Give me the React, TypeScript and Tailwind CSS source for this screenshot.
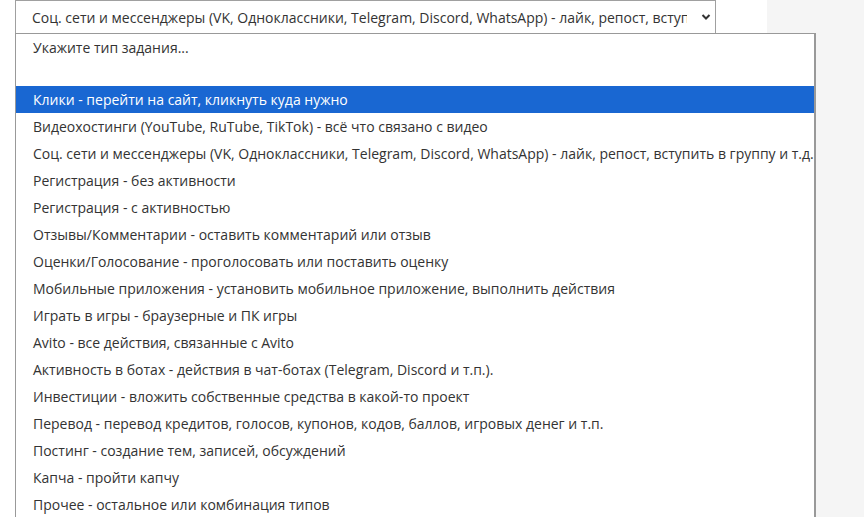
import React from "react";

const options = [
  "Укажите тип задания...",
  "",
  "Клики - перейти на сайт, кликнуть куда нужно",
  "Видеохостинги (YouTube, RuTube, TikTok) - всё что связано с видео",
  "Соц. сети и мессенджеры (VK, Одноклассники, Telegram, Discord, WhatsApp) - лайк, репост, вступить в группу и т.д.",
  "Регистрация - без активности",
  "Регистрация - с активностью",
  "Отзывы/Комментарии - оставить комментарий или отзыв",
  "Оценки/Голосование - проголосовать или поставить оценку",
  "Мобильные приложения - установить мобильное приложение, выполнить действия",
  "Играть в игры - браузерные и ПК игры",
  "Avito - все действия, связанные с Avito",
  "Активность в ботах - действия в чат-ботах (Telegram, Discord и т.п.).",
  "Инвестиции - вложить собственные средства в какой-то проект",
  "Перевод - перевод кредитов, голосов, купонов, кодов, баллов, игровых денег и т.п.",
  "Постинг - создание тем, записей, обсуждений",
  "Капча - пройти капчу",
  "Прочее - остальное или комбинация типов",
];

export default function App() {
  return (
    <div
      className="relative flex h-[517px] w-[864px] overflow-hidden text-[14px] text-[#333]"
      style={{ fontFamily: '"Open Sans", "Noto Sans", sans-serif' }}
    >
      <div className="w-[767px] bg-white">
        <div className="ml-[15px] flex h-[34px] w-[701px] items-center border border-[#a0a0a0] bg-white pl-[16px]">
          <span className="w-[655px] overflow-hidden whitespace-nowrap">
            Соц. сети и мессенджеры (VK, Одноклассники, Telegram, Discord, WhatsApp) - лайк, репост, вступить в группу и т.д.
          </span>
          <svg width="12" height="12" viewBox="0 0 12 12" className="ml-[13px] shrink-0">
            <path d="M2.5 4 L6 7.5 L9.5 4" fill="none" stroke="#333" strokeWidth="2" />
          </svg>
        </div>
      </div>
      <div className="flex-1 bg-[#f5f5f5]" />
      <div className="absolute left-[15px] top-[33px] h-[500px] w-[801px] border border-r-2 border-[#999] bg-white">
        {options.map((o, i) => (
          <div
            key={i}
            className={
              "flex items-center whitespace-nowrap pl-[17px] " +
              (i === 1 ? "h-[25px] " : "h-[27px] ") +
              (i === 2 ? "bg-[#1967d2] text-white" : "")
            }
          >
            {o}
          </div>
        ))}
      </div>
    </div>
  );
}
